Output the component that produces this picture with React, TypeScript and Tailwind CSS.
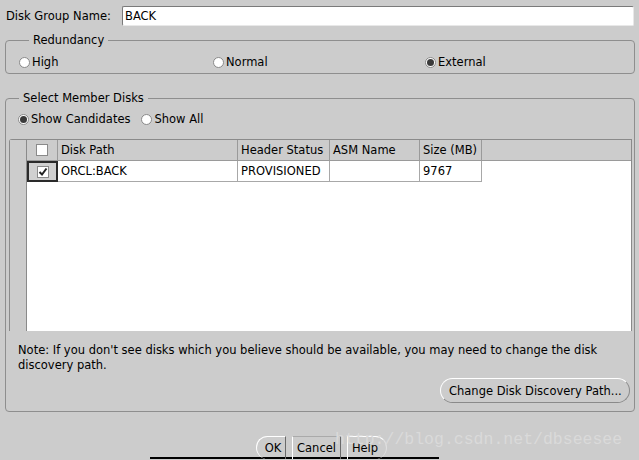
import React from 'react'

const Radio = ({ label, on }: { label: string; on?: boolean }) => (
  <label className="flex items-center gap-[2px]">
    <span className="w-[11px] h-[11px] rounded-full border border-[#8a8a8a] bg-white flex items-center justify-center">
      {on && <span className="w-[7px] h-[7px] rounded-full bg-[#3a3a3a]" />}
    </span>
    <span>{label}</span>
  </label>
)

const Check = ({ on }: { on?: boolean }) => (
  <span className="w-[12px] h-[12px] border border-[#8a8a8a] bg-white flex items-center justify-center">
    {on && (
      <svg width="10" height="10" viewBox="0 0 10 10">
        <path d="M1.5 5 L4 7.5 L8.5 1.5" stroke="#222" strokeWidth="2" fill="none" />
      </svg>
    )}
  </span>
)

const cols = [
  { w: 'w-[31px]', name: '' },
  { w: 'w-[180px]', name: 'Disk Path' },
  { w: 'w-[92px]', name: 'Header Status' },
  { w: 'w-[90px]', name: 'ASM Name' },
  { w: 'w-[62px]', name: 'Size (MB)' },
]

const App = () => {
  return (
    <main
      className="w-[639px] h-[460px] bg-[#cccccc] text-black text-[11.5px] leading-[14px] overflow-hidden relative"
      style={{ fontFamily: '"DejaVu Sans", sans-serif' }}
    >
      {/* name row */}
      <section className="flex items-center pt-[6px] pl-[6px]">
        <span className="w-[116px]">Disk Group Name:</span>
        <div className="w-[512px] h-[20px] bg-white border border-[#7a7a7a] border-r-[#e8e8e8] border-b-[#e8e8e8] rounded-[2px] flex items-center pl-[2px]">
          BACK
        </div>
      </section>

      {/* redundancy */}
      <fieldset className="mx-[5px] mt-[7px] w-[630px] border border-[#8e8e8e] rounded-[4px] pl-[13px] pb-[4px]">
        <legend className="ml-[10px] px-[4px]">Redundancy</legend>
        <div className="flex pt-[8px]">
          <div className="w-[194px]"><Radio label="High" /></div>
          <div className="w-[212px]"><Radio label="Normal" /></div>
          <div><Radio label="External" on /></div>
        </div>
      </fieldset>

      {/* member disks */}
      <fieldset className="mx-[5px] mt-[17px] w-[630px] h-[321px] border border-[#8e8e8e] rounded-[4px] pl-[3px]">
        <legend className="ml-[10px] px-[4px]">Select Member Disks</legend>
        <div className="flex gap-[11px] pl-[9px] pt-[7px]">
          <Radio label="Show Candidates" on />
          <Radio label="Show All" />
        </div>

        <div className="mt-[13px] w-[623px] h-[192px] flex border-t border-l border-r border-[#8a8a8a] rounded-tl-[3px]">
          <div className="w-[17px] bg-[#cccccc] border-r border-[#8a8a8a]" />
          <div className="flex-1 flex flex-col">
            <div className="h-[21px] flex bg-[#cccccc] border-b border-[#9a9a9a]">
              {cols.map((c, i) => (
                <div key={i} className={`${c.w} border-r border-[#9a9a9a] flex items-center ${i === 0 ? 'justify-center' : 'pl-[3px]'}`}>
                  {i === 0 ? <Check /> : c.name}
                </div>
              ))}
            </div>
            <div className="flex-1 bg-white">
              <div className="h-[21px] flex">
                <div className="w-[31px] border-2 border-[#2a2a2a] bg-[#d0d0d0] flex items-center justify-center">
                  <Check on />
                </div>
                <div className="w-[180px] border-r border-b border-[#a8a8a8] flex items-center pl-[3px]">ORCL:BACK</div>
                <div className="w-[92px] border-r border-b border-[#a8a8a8] flex items-center pl-[3px]">PROVISIONED</div>
                <div className="w-[90px] border-r border-b border-[#a8a8a8]" />
                <div className="w-[62px] border-r border-b border-[#a8a8a8] flex items-center pl-[3px]">9767</div>
              </div>
            </div>
          </div>
        </div>

        <p className="pl-[9px] pt-[12px] leading-[15px]">
          Note: If you don&apos;t see disks which you believe should be available, you may need to change the disk
          <br />
          discovery path.
        </p>

        <div className="flex justify-end pr-[4px] pt-[5px]">
          <button
            type="button"
            className="w-[190px] h-[25px] rounded-full border border-white border-r-[#8a8a8a] border-b-[#8a8a8a] bg-[#cccccc] text-left pl-[8px] whitespace-nowrap"
          >
            Change Disk Discovery Path...
          </button>
        </div>
      </fieldset>

      {/* dialog buttons */}
      <section className="flex mt-[24px] pl-[256px] gap-[6px]">
        <button type="button" className="w-[30px] h-[23px] rounded-l-full border border-white border-r-[#6a6a6a] border-b-0 pl-[4px]">OK</button>
        <button type="button" className="w-[49px] h-[23px] border border-white border-r-[#6a6a6a] border-t-[#aaaaaa] border-b-0">Cancel</button>
        <button type="button" className="w-[40px] h-[23px] rounded-r-full border border-white border-r-[#e0e0e0] border-b-0 pr-[4px]">Help</button>
      </section>
      <div className="ml-[150px] w-[289px] h-[2px] bg-black -mt-[2px]" />

      <span
        className="absolute left-[335px] top-[430px] text-[16.5px] leading-[20px] text-[#dadada] pointer-events-none"
        style={{ fontFamily: '"Liberation Mono", monospace' }}
      >
        http://blog.csdn.net/dbseesee
      </span>
    </main>
  )
}

export default App
